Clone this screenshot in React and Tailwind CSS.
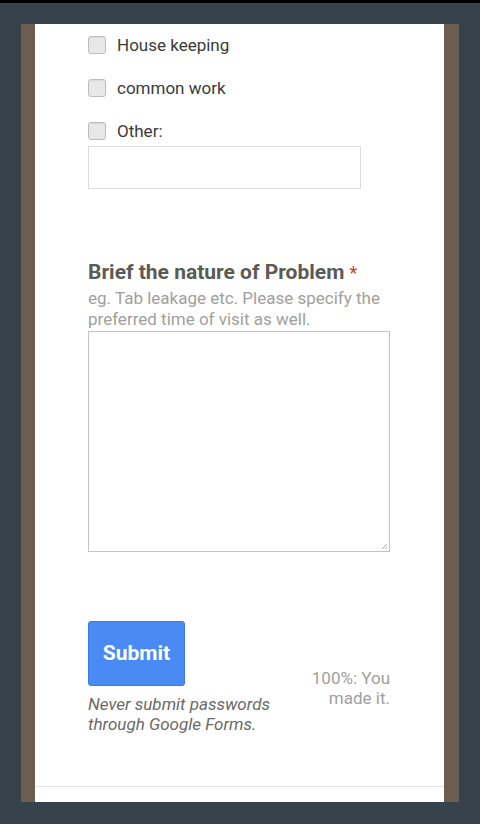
import React from "react";

const OPTIONS = ["House keeping", "common work", "Other:"];

const Checkbox = () => (
  <span className="block w-[18px] h-[18px] rounded-[3px] border border-[#bdbdbd] bg-[#e8e8e8] shadow-[inset_0_1px_1px_rgba(0,0,0,0.06)]" />
);

const App = () => {
  return (
    <div className="w-[480px] h-[824px] bg-[#37434a] overflow-hidden font-['Roboto',sans-serif]">
      <div className="h-[3px] bg-black" />
      <div className="pt-[21px] px-[21px]">
        <div className="flex h-[778px] bg-[#6b5e51] pl-[14px] pr-[15px]">
          <div className="flex flex-col w-full bg-white">
            <div className="flex-1 pl-[53px] pr-[54px]">
              {/* checkbox options */}
              <div className="flex flex-col gap-[21px] pt-[10px]">
                {OPTIONS.map((label) => (
                  <div key={label} className="flex items-center h-[22px] gap-[11px]">
                    <Checkbox />
                    <span className="text-[17px] text-[#3a3a3a] leading-none">{label}</span>
                  </div>
                ))}
              </div>
              <div className="mt-[4px] w-[273px] h-[43px] border border-[#dcdcdc]" />

              {/* question */}
              <div className="mt-[70px] text-[21px] leading-[26px] font-bold text-[#5a5a56]">
                Brief the nature of Problem <span className="text-[#c9432a] font-normal text-[18px]">*</span>
              </div>
              <div className="mt-[2px] text-[17px] leading-[21px] text-[#a0a0a0]">
                eg. Tab leakage etc. Please specify the preferred time of visit as well.
              </div>
              <div className="relative mt-[1px] w-[302px] h-[221px] border border-[#c4c4c4]">
                <svg className="absolute right-[1px] bottom-[1px]" width="7" height="7" viewBox="0 0 7 7">
                  <path d="M6 1L1 6M6 4L4 6" stroke="#b0b0b0" strokeWidth="1" />
                </svg>
              </div>

              {/* submit */}
              <div className="flex justify-between mt-[69px]">
                <div className="flex flex-col">
                  <button className="w-[97px] h-[65px] rounded-[3px] bg-[#4a8af4] border border-[#3c7be6] text-white text-[21px] font-bold">
                    Submit
                  </button>
                  <p className="mt-[8px] text-[17px] leading-[20px] italic text-[#6a6a6a]">
                    Never submit passwords
                    <br />
                    through Google Forms.
                  </p>
                </div>
                <p className="mt-[47px] text-right text-[17px] leading-[20px] text-[#a0a0a0]">
                  100%: You
                  <br />
                  made it.
                </p>
              </div>
            </div>
            <div className="h-[16px] border-t border-[#e2e2e2]" />
          </div>
        </div>
      </div>
    </div>
  );
};

export default App;
